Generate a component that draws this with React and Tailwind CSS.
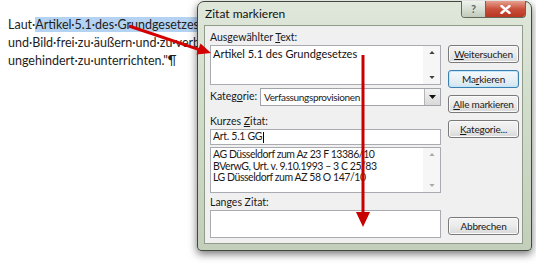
import React from "react";

const Tri = ({ dir, color = "#4a4a4a", w = 7, h = 4 }) => (
  <svg width={w} height={h} viewBox="0 0 7 4" className="block">
    {dir === "up" ? (
      <path d="M0 4 L3.5 0 L7 4Z" fill={color} />
    ) : (
      <path d="M0 0 L3.5 4 L7 0Z" fill={color} />
    )}
  </svg>
);

const ScrollCol = ({ color }) => (
  <div className="w-[17px] h-full flex flex-col justify-between items-center py-[5px] bg-[#f6f6f6]">
    <Tri dir="up" color={color} w={6} h={3} />
    <Tri dir="down" color={color} w={6} h={3} />
  </div>
);

const Btn = ({ children, def }) => (
  <div
    className={
      "h-[18px] w-[71px] rounded-[3px] border flex items-center justify-center whitespace-nowrap text-[10px] tracking-[-0.2px] text-[#1a1a1a] " +
      (def
        ? "border-[#3c7fb1] bg-gradient-to-b from-[#f4f9fc] via-[#e8f1f6] to-[#d2e4ee] shadow-[inset_0_0_0_1px_#bfe6fa]"
        : "border-[#7a7a7a] bg-gradient-to-b from-[#f3f3f3] via-[#ebebeb] to-[#d8d8d8] shadow-[inset_0_0_0_1px_#fbfbfb]")
    }
  >
    {children}
  </div>
);

export default function App() {
  return (
    <div className="relative w-[536px] h-[264px] overflow-hidden bg-white font-['Lato',sans-serif]">
      {/* document text */}
      <div className="pt-[16px] pl-[8px] text-[12.5px] leading-[18px] text-[#1e1e1e] whitespace-nowrap">
        <div>
          Laut·<span className="bg-[#b4d2f1]">Artikel·5.1·des·Grundgesetzes</span>·hat·jeder·das·Recht,·seine·Meinung
        </div>
        <div>und·Bild·frei·zu·äußern·und·zu·verbreiten·und·sich·aus·allgemein</div>
        <div>ungehindert·zu·unterrichten."¶</div>
      </div>

      {/* dialog window */}
      <div className="absolute left-[197px] top-[1px] w-[335px] h-[250px] rounded-t-[7px] rounded-b-[4px] border border-[#3f4a3c] bg-gradient-to-b from-[#dfe7da] via-[#cfdac8] to-[#c3cfba] shadow-[0_3px_9px_rgba(0,0,0,0.55)] flex flex-col">
        {/* title bar */}
        <div className="relative h-[23px] flex items-center pl-[7px] text-[12px] text-[#111]">
          Zitat markieren
          <div className="absolute top-[-1px] right-[5px] flex h-[17px] rounded-b-[4px] overflow-hidden border border-t-0 border-[#5f6a5a]">
            <div className="w-[24px] h-full flex items-center justify-center bg-gradient-to-b from-[#eef2ec] via-[#d9e0d5] to-[#c0cabb] border-r border-[#5f6a5a] text-[11px] font-bold text-[#5b6770]">
              ?
            </div>
            <div className="w-[39px] h-full flex items-center justify-center bg-gradient-to-b from-[#e5a08f] via-[#c9503c] to-[#b8361f]">
              <svg width="11" height="9" viewBox="0 0 11 9">
                <path d="M1.5 1 L9.5 8 M9.5 1 L1.5 8" stroke="#fff" strokeWidth="2.4" strokeLinecap="round" />
              </svg>
            </div>
          </div>
        </div>

        {/* client area */}
        <div className="ml-[6px] mr-[8px] mb-[6px] flex-1 border border-[#8f9c89] bg-[#f0f0f0] flex text-[10.5px] text-[#1a1a1a]">
          {/* left column */}
          <div className="ml-[5px] pt-[4px] w-[231px] flex flex-col">
            <div className="h-[15px] leading-[15px]">
              Ausgewählter <u className="underline-offset-1">T</u>ext:
            </div>
            <div className="h-[40px] border border-[#a9abb0] bg-white flex">
              <div className="flex-1 pl-[2px] pt-[1px] text-[11px] leading-[14px] text-[#111]">
                Artikel 5.1 des Grundgesetzes
              </div>
              <ScrollCol color="#3d3d3d" />
            </div>

            <div className="mt-[3px] h-[18px] flex items-center">
              <div className="w-[50px]">
                Kateg<u className="underline-offset-1">o</u>rie:
              </div>
              <div className="flex-1 h-full border border-[#a0a3a8] bg-white flex">
                <div className="flex-1 pl-[3px] leading-[16px] text-[10px] tracking-[-0.35px] text-[#222]">
                  Verfassungsprovisionen
                </div>
                <div className="w-[16px] h-full border-l border-[#b5b5b5] bg-gradient-to-b from-[#f2f2f2] to-[#d9d9d9] flex items-center justify-center">
                  <Tri dir="down" color="#111" w={7} h={4} />
                </div>
              </div>
            </div>

            <div className="mt-[8px] h-[15px] leading-[15px]">
              Kurzes <u className="underline-offset-1">Z</u>itat:
            </div>
            <div className="h-[16px] border border-[#a9abb0] bg-white flex items-center pl-[2px] text-[10.5px] tracking-[-0.3px]">
              Art. 5.1 GG<span className="inline-block w-[1px] h-[11px] bg-black ml-[1px]" />
            </div>

            <div className="mt-[2px] h-[46px] border border-[#a9abb0] bg-white flex">
              <div className="flex-1 pl-[2px] pt-[1px] text-[10.5px] leading-[11.5px] tracking-[-0.45px] whitespace-nowrap">
                <div>AG Düsseldorf zum Az 23 F 13386/10</div>
                <div>BVerwG, Urt. v. 9.10.1993 – 3 C 25/83</div>
                <div>LG Düsseldorf zum AZ 58 O 147/10</div>
              </div>
              <ScrollCol color="#a8a8a8" />
            </div>

            <div className="mt-[2px] h-[15px] leading-[15px]">Langes Zitat:</div>
            <div className="h-[28px] border border-[#a9abb0] bg-white" />
          </div>

          {/* right column */}
          <div className="ml-[7px] pt-[19px] flex flex-col gap-[7px]">
            <Btn>
              <span>
                <u className="underline-offset-1">W</u>eitersuchen
              </span>
            </Btn>
            <Btn def>
              <span>
                Ma<u className="underline-offset-1">r</u>kieren
              </span>
            </Btn>
            <Btn>
              <span>
                <u className="underline-offset-1">A</u>lle markieren
              </span>
            </Btn>
            <Btn>
              <span>
                <u className="underline-offset-1">K</u>ategorie...
              </span>
            </Btn>
            <div className="mt-[72px]">
              <Btn>Abbrechen</Btn>
            </div>
          </div>
        </div>
      </div>

      {/* red arrows */}
      <svg className="absolute inset-0 pointer-events-none" width="536" height="264" viewBox="0 0 536 264">
        <line x1="129" y1="26" x2="200" y2="49.8" stroke="#d40000" strokeWidth="3" />
        <polygon points="211,53 196.5,54.5 200.5,43.5" fill="#d40000" />
        <line x1="363" y1="55" x2="363" y2="214" stroke="#c80000" strokeWidth="3" />
        <polygon points="356,212 370,212 363,227" fill="#c80000" />
      </svg>
    </div>
  );
}
